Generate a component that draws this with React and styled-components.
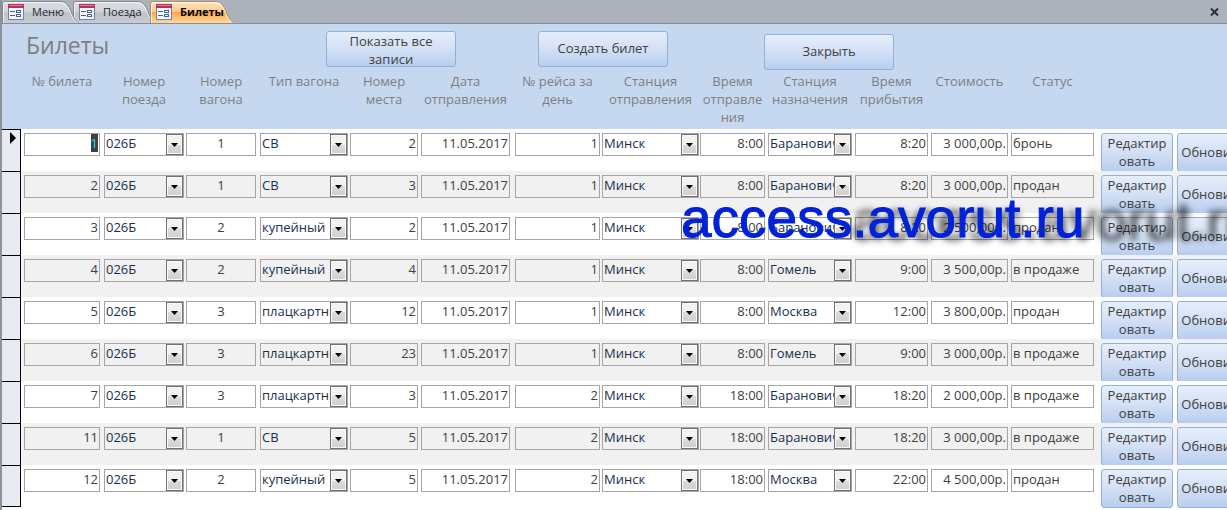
import React, { useEffect, useRef } from "react";
import styled, { createGlobalStyle, css } from "styled-components";

const GlobalStyle = createGlobalStyle`
  *, *::before, *::after { box-sizing: border-box; }
  html, body { margin: 0; background: #fff; }
  body, button, input, select {
    font-family: "Open Sans", "Noto Sans", sans-serif;
    font-size: 13px;
    line-height: 18px;
  }
`;

const Shell = styled.main`
  position: relative;
  min-height: 100vh;
  overflow: hidden;
  border-left: 2px solid #8d929b;
  background: #fff;
`;

/* ---------- document tabs ---------- */

const TabBar = styled.nav`
  display: flex;
  align-items: flex-end;
  height: 24px;
  background: #abb2bc;
  border-bottom: 1px solid #868f96;
  isolation: isolate;
`;

const Tab = styled.button`
  position: relative;
  z-index: ${(p) => p.$level};
  display: flex;
  align-items: center;
  flex: none;
  gap: 8px;
  width: ${(p) => p.$width}px;
  height: 23px;
  margin: 0 -8px 0 0;
  padding: 0 0 0 6px;
  border: 0;
  background: none;
  color: ${(p) => (p.$active ? "#000" : "#26282c")};
  font-size: 11px;
  font-weight: ${(p) => (p.$active ? 700 : 400)};
  text-align: left;
`;

const TabShape = styled.svg`
  position: absolute;
  inset: 0;
`;

const TabIcon = styled.svg`
  position: relative;
  flex: none;
`;

const TabLabel = styled.span`
  position: relative;
`;

const CloseForm = styled.button`
  display: grid;
  place-items: center;
  width: 20px;
  height: 20px;
  margin: 0 3px 1px auto;
  padding: 0;
  border: 0;
  background: none;
`;

/* ---------- form header ---------- */

const FormHeader = styled.header`
  display: grid;
  grid-template-columns: 300px 212px 226px 130px;
  height: 48px;
  padding: 7px 0 2px 24px;
  background: #c6d8f0;
`;

const Title = styled.h1`
  margin: 0;
  color: #7f7f7f;
  font-size: 23px;
  font-weight: 400;
  line-height: 28px;
`;

const buttonFace = css`
  border: 1px solid #92b0d9;
  border-radius: 3px;
  background: linear-gradient(#e6eefa, #d3e0f5 50%, #b8cef0);
  color: #404040;
  overflow: hidden;
`;

const ActionButton = styled.button`
  ${buttonFace}
  align-self: ${(p) => p.$align || "start"};
  width: 130px;
  height: 36px;
  padding: 0 16px 2px;
`;

/* ---------- records ---------- */

const Records = styled.table`
  width: 1227px;
  table-layout: fixed;
  border-collapse: separate;
  border-spacing: 0;
`;

const HeadCell = styled.th`
  height: 57px;
  padding: 0 ${(p) => p.$gap || 0}px 0 0;
  background: #c6d8f0;
  color: #7f7f7f;
  font-weight: 400;
  text-align: center;
  vertical-align: top;
  overflow-wrap: anywhere;
`;

const Row = styled.tr`
  height: 42px;
  background: #fff;

  &:nth-child(even) { background: #f1f1f1; }
`;

const Selector = styled.th`
  padding: 2px 0 0 8px;
  border-top: 1px solid #000;
  border-right: 1px solid #000;
  background: #e8ecf2;
  vertical-align: top;
  text-align: left;

  ${Row}:last-child & { border-bottom: 1px solid #000; }

  svg { display: block; }
`;

const Cell = styled.td`
  padding: 4px ${(p) => p.$gap || 0}px 0 0;
  vertical-align: top;
`;

const TextField = styled.input`
  display: block;
  width: 100%;
  height: 23px;
  padding: 0 1px 3px;
  border: 1px solid #a5a5a5;
  border-radius: 0;
  outline: 0;
  background: transparent;
  color: #404040;
  text-align: ${(p) => p.$align || "left"};

  &::selection { background: #404040; color: #00e5ff; }
`;

const Combo = styled.div`
  position: relative;
  height: 23px;
  border: 1px solid #a5a5a5;
`;

const ComboSelect = styled.select`
  display: block;
  appearance: none;
  width: 100%;
  height: 21px;
  padding: 0 17px 3px 1px;
  border: 0;
  border-radius: 0;
  outline: 0;
  background: transparent;
  color: #17304f;
`;

const ComboArrow = styled.span`
  position: absolute;
  top: 0;
  right: 0;
  display: grid;
  place-items: center;
  width: 17px;
  height: 21px;
  border: 1px solid #707070;
  background: linear-gradient(#f2f2f2 50%, #dcdcdc 50%, #cfcfcf);
  box-shadow: inset 0 0 0 1px #fbfbfb;
  pointer-events: none;
`;

const RowButton = styled.button`
  ${buttonFace}
  display: block;
  width: 100%;
  height: 39px;
  margin-bottom: -1px;
  padding: 0 3px 2px;
  overflow-wrap: anywhere;
`;

const Watermark = styled.div`
  position: absolute;
  top: 187px;
  left: 679px;
  color: #0022d8;
  font-family: "Liberation Sans", Arial, sans-serif;
  font-size: 55px;
  line-height: 62px;
  white-space: nowrap;
  -webkit-text-stroke: 1px #0022d8;
  text-shadow: 171px 3px 7px rgba(0, 0, 0, 0.8);
  pointer-events: none;
`;

const columns = [
  { key: "ticket", label: "№ билета", width: 80, gap: 4, align: "right" },
  { key: "train", label: "Номер поезда", width: 82, gap: 2, combo: true },
  { key: "car", label: "Номер вагона", width: 74, gap: 4, align: "center" },
  { key: "type", label: "Тип вагона", width: 90, gap: 2, combo: true },
  { key: "seat", label: "Номер места", width: 71, gap: 3, align: "right" },
  { key: "date", label: "Дата отправления", width: 94, gap: 5, align: "right" },
  { key: "run", label: "№ рейса за день", width: 87, gap: 2, align: "right" },
  { key: "from", label: "Станция отправления", width: 98, gap: 1, combo: true },
  { key: "departs", label: "Время отправле\u200bния", width: 68, gap: 3, align: "right" },
  { key: "to", label: "Станция назначения", width: 87, gap: 3, combo: true },
  { key: "arrives", label: "Время прибытия", width: 76, gap: 3, align: "right" },
  { key: "price", label: "Стоимость", width: 80, gap: 3, align: "right" },
  { key: "status", label: "Статус", width: 90, gap: 7 },
];

const date = "11.05.2017";
const keys = columns.map((c) => c.key);
const tickets = [
  ["1", "026Б", "1", "СВ", "2", date, "1", "Минск", "8:00", "Барановичи", "8:20", "3 000,00р.", "бронь"],
  ["2", "026Б", "1", "СВ", "3", date, "1", "Минск", "8:00", "Барановичи", "8:20", "3 000,00р.", "продан"],
  ["3", "026Б", "2", "купейный", "2", date, "1", "Минск", "8:00", "Барановичи", "8:20", "2 500,00р.", "продан"],
  ["4", "026Б", "2", "купейный", "4", date, "1", "Минск", "8:00", "Гомель", "9:00", "3 500,00р.", "в продаже"],
  ["5", "026Б", "3", "плацкартный", "12", date, "1", "Минск", "8:00", "Москва", "12:00", "3 800,00р.", "продан"],
  ["6", "026Б", "3", "плацкартный", "23", date, "1", "Минск", "8:00", "Гомель", "9:00", "3 000,00р.", "в продаже"],
  ["7", "026Б", "3", "плацкартный", "3", date, "2", "Минск", "18:00", "Барановичи", "18:20", "2 000,00р.", "в продаже"],
  ["11", "026Б", "1", "СВ", "5", date, "2", "Минск", "18:00", "Барановичи", "18:20", "3 000,00р.", "в продаже"],
  ["12", "026Б", "2", "купейный", "5", date, "2", "Минск", "18:00", "Москва", "22:00", "4 500,00р.", "продан"],
].map((values) => Object.fromEntries(values.map((v, i) => [keys[i], v])));

function FormTab({ id, width, level, active, children }) {
  const slope = (inset) =>
    `H${width - 20 - inset} C${width - 9 - inset} ${1.5 + inset} ${width - 11 - inset} 19 ${width - 2 - inset} 23`;
  return (
    <Tab type="button" $width={width} $level={level} $active={active} aria-current={active ? "page" : undefined}>
      <TabShape width={width} height="23" aria-hidden="true">
        <defs>
          <linearGradient id={id} x1="0" y1="0" x2="0" y2="1">
            {active ? (
              <>
                <stop offset="0" stopColor="#fde6c4" />
                <stop offset="0.48" stopColor="#fdc98a" />
                <stop offset="0.5" stopColor="#fba93f" />
                <stop offset="1" stopColor="#fdd9a6" />
              </>
            ) : (
              <>
                <stop offset="0" stopColor="#dcdfe3" />
                <stop offset="0.5" stopColor="#cfd3d8" />
                <stop offset="0.52" stopColor="#bcc1c8" />
                <stop offset="1" stopColor="#c8ccd2" />
              </>
            )}
          </linearGradient>
        </defs>
        <path
          d={`M0.5 23 V3.5 Q0.5 1.5 2.5 1.5 ${slope(0)}`}
          fill={`url(#${id})`}
          stroke={active ? "#a88f6c" : "#7f868e"}
        />
        <path
          d={`M1.5 23 V4.5 Q1.5 2.5 3.5 2.5 ${slope(1)}`}
          fill="none"
          stroke="#fff"
          strokeOpacity="0.7"
        />
      </TabShape>
      <TabIcon width="16" height="16" aria-hidden="true">
        <rect x="0.5" y="1.5" width="15" height="14" fill="#f4f7fc" stroke="#6c83ad" />
        <rect x="0" y="0" width="16" height="4" fill="#b8315c" />
        <rect x="1" y="1" width="14" height="1" fill="#df7d9b" />
        <path d="M2 7.5 H7 M2 11.5 H7" stroke="#47628f" />
        <rect x="8.5" y="6.5" width="4" height="2" fill="#fff" stroke="#47628f" />
        <rect x="8.5" y="10.5" width="4" height="2" fill="#fff" stroke="#47628f" />
      </TabIcon>
      <TabLabel>{children}</TabLabel>
    </Tab>
  );
}

function ComboBox({ label, value }) {
  return (
    <Combo>
      <ComboSelect aria-label={label} defaultValue={value}>
        <option>{value}</option>
      </ComboSelect>
      <ComboArrow aria-hidden="true">
        <svg width="7" height="4"><path d="M0 0 H7 L3.5 4 Z" fill="#000" /></svg>
      </ComboArrow>
    </Combo>
  );
}

export default function App() {
  const current = useRef(null);

  useEffect(() => {
    current.current.focus();
    current.current.select();
  }, []);

  return (
    <>
      <GlobalStyle />
      <Shell>
        <TabBar aria-label="Открытые формы">
          <FormTab id="tab-menu" width={79} level={2}>Меню</FormTab>
          <FormTab id="tab-trains" width={85} level={1}>Поезда</FormTab>
          <FormTab id="tab-tickets" width={86} level={3} active>Билеты</FormTab>
          <CloseForm type="button" aria-label="Закрыть форму">
            <svg width="9" height="8"><path d="M1 0.5 L8 7.5 M8 0.5 L1 7.5" stroke="#2c2f33" strokeWidth="2" /></svg>
          </CloseForm>
        </TabBar>

        <FormHeader>
          <Title>Билеты</Title>
          <ActionButton type="button">Показать все записи</ActionButton>
          <ActionButton type="button">Создать билет</ActionButton>
          <ActionButton type="button" $align="end">Закрыть</ActionButton>
        </FormHeader>

        <Records>
          <colgroup>
            <col width="19" />
            <col width="3" />
            {columns.map((c) => <col key={c.key} width={c.width} />)}
            <col width="76" />
            <col width="72" />
          </colgroup>
          <thead>
            <tr>
              <HeadCell as="td" colSpan={2} />
              {columns.map((c) => <HeadCell key={c.key} scope="col" $gap={c.gap}>{c.label}</HeadCell>)}
              <HeadCell as="td" colSpan={2} />
            </tr>
          </thead>
          <tbody>
            {tickets.map((ticket, row) => (
              <Row key={ticket.ticket}>
                <Selector scope="row" aria-label={`Запись ${ticket.ticket}`}>
                  {row === 0 && <svg width="6" height="12"><path d="M0 0 L6 6 L0 12 Z" fill="#000" /></svg>}
                </Selector>
                <Cell />
                {columns.map((c) => (
                  <Cell key={c.key} $gap={c.gap}>
                    {c.combo ? (
                      <ComboBox label={c.label} value={ticket[c.key]} />
                    ) : (
                      <TextField
                        ref={row === 0 && c.key === "ticket" ? current : undefined}
                        type="text"
                        aria-label={c.label}
                        defaultValue={ticket[c.key]}
                        $align={c.align}
                      />
                    )}
                  </Cell>
                ))}
                <Cell $gap={4}><RowButton type="button">Редактировать</RowButton></Cell>
                <Cell><RowButton type="button">Обновить</RowButton></Cell>
              </Row>
            ))}
          </tbody>
        </Records>

        <Watermark>access.avorut.ru</Watermark>
      </Shell>
    </>
  );
}
